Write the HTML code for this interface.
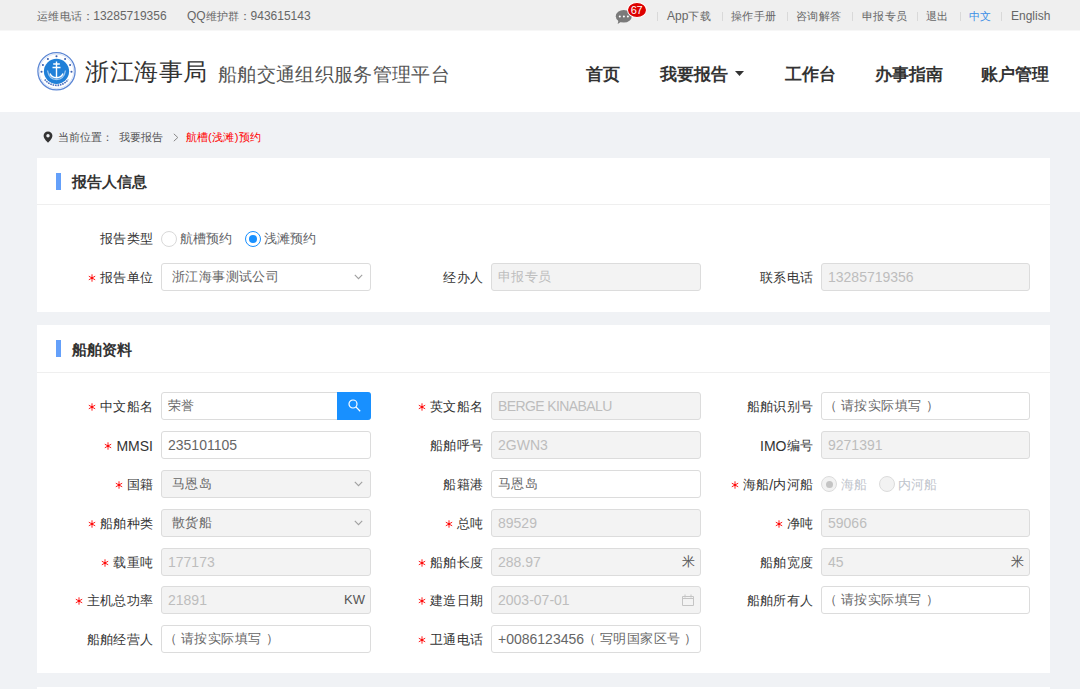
<!DOCTYPE html>
<html><head><meta charset="utf-8">
<style>
*{box-sizing:border-box;margin:0;padding:0}
html,body{width:1080px;height:689px;overflow:hidden}
body{position:relative;background:#f0f2f5;font-family:"Liberation Sans",sans-serif;color:#333}
.abs{position:absolute;white-space:nowrap}
.cl{letter-spacing:-.5px;margin-left:-.5px}
.tc{font-size:11px;letter-spacing:.3px}
.bc{top:130px;font-size:11px;line-height:14px;color:#555}
#top{position:absolute;left:0;top:0;width:1080px;height:30px;background:#efefef;font-size:12px;color:#666}
#top .t{position:absolute;top:.5px;line-height:31px;white-space:nowrap}
#top .sep{position:absolute;top:12px;width:1px;height:9px;background:#d9d9d9}
#hdr{position:absolute;left:0;top:30px;width:1080px;height:82px;background:#fff}
.nav{position:absolute;top:0;line-height:89px;font-size:17px;font-weight:bold;color:#333;white-space:nowrap}
.card{position:absolute;left:37px;width:1013px;background:#fff}
.card .hd{position:absolute;left:0;top:0;width:100%;border-bottom:1px solid #efefef}
.card .bar{position:absolute;left:19px;width:5px;background:#64a0fa}
.card .ttl{position:absolute;left:34.5px;font-size:15px;font-weight:bold;color:#333;white-space:nowrap}
.lbl{position:absolute;font-size:14px;color:#333;white-space:nowrap;text-align:right;line-height:28px}
.req{color:#f56c6c;margin-right:4px}
.inp{position:absolute;height:28px;border:1px solid #dcdcdc;border-radius:3px;background:#fff;font-size:14px;color:#666;line-height:26px;padding-left:6px;white-space:nowrap}
.inp.dis{background:#f3f3f3;border-color:#dcdcdc;color:#bdbdbd}
.cj{font-size:13px;vertical-align:top;letter-spacing:.4px}
.lbl .cj{letter-spacing:.25px}
.ast{display:inline-block;vertical-align:top;margin:10px 4px 0 0}
.inp.sel{padding-left:10px}
.inp.dis.sel{color:#666}
.chev{position:absolute;right:7px;top:9.5px}
.suf{position:absolute;right:5px;top:0;font-size:13px;color:#555}
.cal{position:absolute;right:6px;top:7px}
.sbtn{position:absolute;right:-1px;top:-1px;width:34px;height:28px;background:#1890ff;border-radius:0 3px 3px 0;display:flex;align-items:center;justify-content:center}
.rad{position:absolute;width:16px;height:16px;border-radius:50%;border:1px solid #d9d9d9;background:#fff}
.rad.on{border:1.3px solid #1890ff}
.rad.on::after{}
.rad.on::after{content:"";position:absolute;left:3px;top:3px;width:8px;height:8px;border-radius:50%;background:#1890ff}
.rad.rdis{background:#f2f2f2;border-color:#dcdcdc}
.rad.rdis.on::after{background:#c4c4c4;left:3.5px;top:3.5px;width:7px;height:7px}
.rtxt{position:absolute;font-size:13px;line-height:28px;color:#606266;white-space:nowrap}
.rtxt.dis{color:#c0c4cc}
</style></head><body>
<div id="top">
  <div class="t" style="left:37px"><span class="tc">运维电话</span><span class="cl">：</span>13285719356</div>
  <div class="t" style="left:187px">QQ<span class="tc">维护群</span><span class="cl">：</span>943615143</div>
  <svg class="abs" style="left:615px;top:9px" width="18" height="16" viewBox="0 0 18 16"><ellipse cx="8.8" cy="7.2" rx="8" ry="6.3" fill="#7a7a7a"/><path d="M3.5 11l-.8 4 4.5-3z" fill="#7a7a7a"/><circle cx="4.8" cy="7.4" r="1" fill="#fff"/><circle cx="8.9" cy="7.4" r="1" fill="#fff"/><circle cx="12.9" cy="7.4" r="1" fill="#fff"/></svg>
  <div class="abs" style="left:626.5px;top:1.5px;width:20px;height:16px;border-radius:50%;background:#dd0000;border:1px solid #fff;color:#fff;font-size:11px;line-height:14px;text-align:center;letter-spacing:-.3px">67</div>
  <div class="sep" style="left:657px"></div>
  <div class="t" style="left:667px">App<span class="tc">下载</span></div>
  <div class="sep" style="left:722px"></div>
  <div class="t" style="left:731px"><span class="tc">操作手册</span></div>
  <div class="sep" style="left:787px"></div>
  <div class="t" style="left:796px"><span class="tc">咨询解答</span></div>
  <div class="sep" style="left:852px"></div>
  <div class="t" style="left:862px"><span class="tc">申报专员</span></div>
  <div class="sep" style="left:917px"></div>
  <div class="t" style="left:926px"><span class="tc">退出</span></div>
  <div class="sep" style="left:960px"></div>
  <div class="t" style="left:969px;color:#3a8ee6"><span class="tc">中文</span></div>
  <div class="sep" style="left:1001px"></div>
  <div class="t" style="left:1011px">English</div>
</div>
<div id="hdr">
  <div class="abs" style="left:0;top:0;width:1080px;height:1px;background:#f7f7f7"></div>
  <svg class="abs" style="left:37px;top:22px" width="39" height="39" viewBox="0 0 39 39">
    <circle cx="19.5" cy="19.3" r="18.6" fill="#fff" stroke="#5b86d4" stroke-width="1.3"/>
    <circle cx="19.5" cy="19.3" r="17.2" fill="none" stroke="#c5d6f2" stroke-width=".7"/>
    <circle cx="19.50" cy="4.30" r="1.05" fill="#3a5fb0"/><circle cx="28.10" cy="7.01" r="1.05" fill="#3a5fb0"/><circle cx="10.90" cy="7.01" r="1.05" fill="#3a5fb0"/><circle cx="33.09" cy="12.96" r="1.05" fill="#3a5fb0"/><circle cx="5.91" cy="12.96" r="1.05" fill="#3a5fb0"/><circle cx="34.49" cy="19.82" r="1.05" fill="#3a5fb0"/><circle cx="4.51" cy="19.82" r="1.05" fill="#3a5fb0"/>
    <path d="M7.8 27.5A14.6 14.6 0 0 0 31.2 27.5" fill="none" stroke="#4a6fbf" stroke-width="1.6" stroke-dasharray="1.6 .8"/>
    <circle cx="19.5" cy="19.3" r="12.6" fill="#2080d8"/>
    <path d="M10.5 18.5Q12 27.5 19.5 27.5T28.5 18.5" fill="none" stroke="#9cc6f0" stroke-width="1.3"/>
    <path d="M19.5 9.5v16.5M16.2 12h6.6M15.5 15.5h8M13 21.5q1.5 4 6.5 4.3q5-.3 6.5-4.3" fill="none" stroke="#fff" stroke-width="1.4"/>
  </svg>
  <div class="abs" style="left:85px;top:0;line-height:84px;font-size:24px;letter-spacing:.5px;color:#333">浙江海事局</div>
  <div class="abs" style="left:218px;top:0;line-height:90px;font-size:19px;letter-spacing:.35px;color:#555">船舶交通组织服务管理平台</div>
  <div class="nav" style="left:586px">首页</div>
  <div class="nav" style="left:660px">我要报告</div>
  <svg class="abs" style="left:735px;top:41px" width="9" height="5" viewBox="0 0 9 5"><path d="M0 0h9L4.5 5z" fill="#333"/></svg>
  <div class="nav" style="left:784.5px">工作台</div>
  <div class="nav" style="left:875px">办事指南</div>
  <div class="nav" style="left:980.5px">账户管理</div>
</div>
<!-- breadcrumb -->
<svg class="abs" style="left:43px;top:131px" width="10" height="12" viewBox="0 0 10 12"><path d="M5 0.5C2.5 0.5 0.6 2.4 0.6 4.8 0.6 7.9 5 11.8 5 11.8S9.4 7.9 9.4 4.8C9.4 2.4 7.5 0.5 5 0.5z" fill="#333"/><circle cx="5" cy="4.7" r="1.7" fill="#f0f2f5"/></svg>
<div class="abs bc" style="left:58px">当前位置：</div>
<div class="abs bc" style="left:119px">我要报告</div>
<svg class="abs" style="left:173px;top:133px" width="6" height="9" viewBox="0 0 6 9"><path d="M.8.8l4 3.7-4 3.7" fill="none" stroke="#888" stroke-width="1"/></svg>
<div class="abs bc" style="left:185.5px;color:#f00;letter-spacing:.3px">航槽(浅滩)预约</div>

<div class="card" style="top:158px;height:154px">
  <div class="hd" style="height:47px"></div>
  <div class="bar" style="top:15px;height:17px"></div>
  <div class="ttl" style="top:13.5px;line-height:20px">报告人信息</div>
</div>
<div class="card" style="top:325px;height:348px">
  <div class="hd" style="height:48px"></div>
  <div class="bar" style="top:15px;height:17px"></div>
  <div class="ttl" style="top:14.5px;line-height:20px">船舶资料</div>
</div>
<div class="card" style="top:687px;height:10px"></div>
<!--FORM-->
<div class="lbl" style="right:927px;top:225.2px"><span class="cj">报告类型</span></div>
<div class="rad" style="left:161px;top:230.7px"></div>
<div class="rtxt" style="left:180px;top:225.2px">航槽预约</div>
<div class="rad on" style="left:245px;top:230.7px"></div>
<div class="rtxt" style="left:264px;top:225.2px">浅滩预约</div>
<div class="lbl" style="right:927px;top:263.5px"><svg class="ast" width="8" height="8" viewBox="0 0 8 8"><path d="M4 .3v7.4M.8 2.2l6.4 3.6M.8 5.8l6.4-3.6" stroke="#f00" stroke-width=".9"/><circle cx="4" cy="4" r=".9" fill="#f00"/></svg><span class="cj">报告单位</span></div>
<div class="inp sel" style="left:161px;top:263px;width:210px"><span class="cj">浙江海事测试公司</span><svg class="chev" width="9" height="6" viewBox="0 0 9 6"><path d="M.8.8L4.5 4.6 8.2.8" fill="none" stroke="#a0a0a0" stroke-width="1.1"/></svg></div>
<div class="lbl" style="right:597px;top:263.5px"><span class="cj">经办人</span></div>
<div class="inp dis" style="left:491px;top:263px;width:210px"><span class="cj">申报专员</span></div>
<div class="lbl" style="right:267px;top:263.5px"><span class="cj">联系电话</span></div>
<div class="inp dis" style="left:821px;top:263px;width:209px">13285719356</div>
<div class="lbl" style="right:927px;top:392.5px"><svg class="ast" width="8" height="8" viewBox="0 0 8 8"><path d="M4 .3v7.4M.8 2.2l6.4 3.6M.8 5.8l6.4-3.6" stroke="#f00" stroke-width=".9"/><circle cx="4" cy="4" r=".9" fill="#f00"/></svg><span class="cj">中文船名</span></div>
<div class="inp" style="left:161px;top:392px;width:210px"><span class="cj">荣誉</span><div class="sbtn"><svg width="14" height="14" viewBox="0 0 14 14"><circle cx="6" cy="5" r="4" fill="none" stroke="#fff" stroke-width="1.2"/><path d="M8.9 7.9l4.3 4.3" stroke="#fff" stroke-width="1.3"/></svg></div></div>
<div class="lbl" style="right:597px;top:392.5px"><svg class="ast" width="8" height="8" viewBox="0 0 8 8"><path d="M4 .3v7.4M.8 2.2l6.4 3.6M.8 5.8l6.4-3.6" stroke="#f00" stroke-width=".9"/><circle cx="4" cy="4" r=".9" fill="#f00"/></svg><span class="cj">英文船名</span></div>
<div class="inp dis" style="left:491px;top:392px;width:210px"><span style="letter-spacing:-.6px">BERGE KINABALU</span></div>
<div class="lbl" style="right:267px;top:392.5px"><span class="cj">船舶识别号</span></div>
<div class="inp" style="left:821px;top:392px;width:209px"><span class="cj"><span style="margin-left:-4px;letter-spacing:4px">（</span>请按实际填写<span style="margin-left:4.5px">）</span></span></div>
<div class="lbl" style="right:927px;top:431.5px"><svg class="ast" width="8" height="8" viewBox="0 0 8 8"><path d="M4 .3v7.4M.8 2.2l6.4 3.6M.8 5.8l6.4-3.6" stroke="#f00" stroke-width=".9"/><circle cx="4" cy="4" r=".9" fill="#f00"/></svg>MMSI</div>
<div class="inp" style="left:161px;top:431px;width:210px">235101105</div>
<div class="lbl" style="right:597px;top:431.5px"><span class="cj">船舶呼号</span></div>
<div class="inp dis" style="left:491px;top:431px;width:210px">2GWN3</div>
<div class="lbl" style="right:267px;top:431.5px">IMO<span class="cj">编号</span></div>
<div class="inp dis" style="left:821px;top:431px;width:209px">9271391</div>
<div class="lbl" style="right:927px;top:470.5px"><svg class="ast" width="8" height="8" viewBox="0 0 8 8"><path d="M4 .3v7.4M.8 2.2l6.4 3.6M.8 5.8l6.4-3.6" stroke="#f00" stroke-width=".9"/><circle cx="4" cy="4" r=".9" fill="#f00"/></svg><span class="cj">国籍</span></div>
<div class="inp dis sel" style="left:161px;top:470px;width:210px"><span class="cj">马恩岛</span><svg class="chev" width="9" height="6" viewBox="0 0 9 6"><path d="M.8.8L4.5 4.6 8.2.8" fill="none" stroke="#a0a0a0" stroke-width="1.1"/></svg></div>
<div class="lbl" style="right:597px;top:470.5px"><span class="cj">船籍港</span></div>
<div class="inp" style="left:491px;top:470px;width:210px"><span class="cj">马恩岛</span></div>
<div class="lbl" style="right:267px;top:470.5px"><svg class="ast" width="8" height="8" viewBox="0 0 8 8"><path d="M4 .3v7.4M.8 2.2l6.4 3.6M.8 5.8l6.4-3.6" stroke="#f00" stroke-width=".9"/><circle cx="4" cy="4" r=".9" fill="#f00"/></svg><span class="cj">海船</span>/<span class="cj">内河船</span></div>
<div class="rad on rdis" style="left:821px;top:476.4px"></div>
<div class="rtxt dis" style="left:841px;top:470.9px">海船</div>
<div class="rad rdis" style="left:878.5px;top:476.4px"></div>
<div class="rtxt dis" style="left:898px;top:470.9px">内河船</div>
<div class="lbl" style="right:927px;top:509.5px"><svg class="ast" width="8" height="8" viewBox="0 0 8 8"><path d="M4 .3v7.4M.8 2.2l6.4 3.6M.8 5.8l6.4-3.6" stroke="#f00" stroke-width=".9"/><circle cx="4" cy="4" r=".9" fill="#f00"/></svg><span class="cj">船舶种类</span></div>
<div class="inp dis sel" style="left:161px;top:509px;width:210px"><span class="cj">散货船</span><svg class="chev" width="9" height="6" viewBox="0 0 9 6"><path d="M.8.8L4.5 4.6 8.2.8" fill="none" stroke="#a0a0a0" stroke-width="1.1"/></svg></div>
<div class="lbl" style="right:597px;top:509.5px"><svg class="ast" width="8" height="8" viewBox="0 0 8 8"><path d="M4 .3v7.4M.8 2.2l6.4 3.6M.8 5.8l6.4-3.6" stroke="#f00" stroke-width=".9"/><circle cx="4" cy="4" r=".9" fill="#f00"/></svg><span class="cj">总吨</span></div>
<div class="inp dis" style="left:491px;top:509px;width:210px">89529</div>
<div class="lbl" style="right:267px;top:509.5px"><svg class="ast" width="8" height="8" viewBox="0 0 8 8"><path d="M4 .3v7.4M.8 2.2l6.4 3.6M.8 5.8l6.4-3.6" stroke="#f00" stroke-width=".9"/><circle cx="4" cy="4" r=".9" fill="#f00"/></svg><span class="cj">净吨</span></div>
<div class="inp dis" style="left:821px;top:509px;width:209px">59066</div>
<div class="lbl" style="right:927px;top:548.5px"><svg class="ast" width="8" height="8" viewBox="0 0 8 8"><path d="M4 .3v7.4M.8 2.2l6.4 3.6M.8 5.8l6.4-3.6" stroke="#f00" stroke-width=".9"/><circle cx="4" cy="4" r=".9" fill="#f00"/></svg><span class="cj">载重吨</span></div>
<div class="inp dis" style="left:161px;top:548px;width:210px">177173</div>
<div class="lbl" style="right:597px;top:548.5px"><svg class="ast" width="8" height="8" viewBox="0 0 8 8"><path d="M4 .3v7.4M.8 2.2l6.4 3.6M.8 5.8l6.4-3.6" stroke="#f00" stroke-width=".9"/><circle cx="4" cy="4" r=".9" fill="#f00"/></svg><span class="cj">船舶长度</span></div>
<div class="inp dis" style="left:491px;top:548px;width:210px">288.97<span class="suf">米</span></div>
<div class="lbl" style="right:267px;top:548.5px"><span class="cj">船舶宽度</span></div>
<div class="inp dis" style="left:821px;top:548px;width:209px">45<span class="suf">米</span></div>
<div class="lbl" style="right:927px;top:586.5px"><svg class="ast" width="8" height="8" viewBox="0 0 8 8"><path d="M4 .3v7.4M.8 2.2l6.4 3.6M.8 5.8l6.4-3.6" stroke="#f00" stroke-width=".9"/><circle cx="4" cy="4" r=".9" fill="#f00"/></svg><span class="cj">主机总功率</span></div>
<div class="inp dis" style="left:161px;top:586px;width:210px">21891<span class="suf">KW</span></div>
<div class="lbl" style="right:597px;top:586.5px"><svg class="ast" width="8" height="8" viewBox="0 0 8 8"><path d="M4 .3v7.4M.8 2.2l6.4 3.6M.8 5.8l6.4-3.6" stroke="#f00" stroke-width=".9"/><circle cx="4" cy="4" r=".9" fill="#f00"/></svg><span class="cj">建造日期</span></div>
<div class="inp dis" style="left:491px;top:586px;width:210px">2003-07-01<svg class="cal" width="12" height="12" viewBox="0 0 12 12"><path d="M.5 2.5h11v9H.5z M.5 4.5h11 M3 .5v3 M9 .5v3" fill="none" stroke="#c4c4c4" stroke-width="1"/></svg></div>
<div class="lbl" style="right:267px;top:586.5px"><span class="cj">船舶所有人</span></div>
<div class="inp" style="left:821px;top:586px;width:209px"><span class="cj"><span style="margin-left:-4px;letter-spacing:4px">（</span>请按实际填写<span style="margin-left:4.5px">）</span></span></div>
<div class="lbl" style="right:927px;top:625.5px"><span class="cj">船舶经营人</span></div>
<div class="inp" style="left:161px;top:625px;width:210px"><span class="cj"><span style="margin-left:-4px;letter-spacing:4px">（</span>请按实际填写<span style="margin-left:4.5px">）</span></span></div>
<div class="lbl" style="right:597px;top:625.5px"><svg class="ast" width="8" height="8" viewBox="0 0 8 8"><path d="M4 .3v7.4M.8 2.2l6.4 3.6M.8 5.8l6.4-3.6" stroke="#f00" stroke-width=".9"/><circle cx="4" cy="4" r=".9" fill="#f00"/></svg><span class="cj">卫通电话</span></div>
<div class="inp" style="left:491px;top:625px;width:210px">+0086123456<span class="cj"><span style="letter-spacing:4px;margin-left:-1px">（</span>写明国家区号<span style="margin-left:3.5px">）</span></span></div>
<!--/FORM-->
</body></html>
